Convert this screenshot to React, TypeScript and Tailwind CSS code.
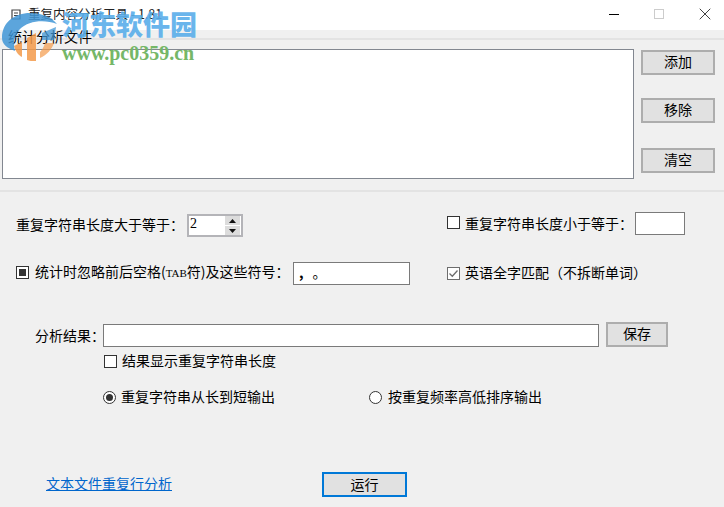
import { X } from "lucide-react"

const FONT = "font-['Noto_Sans_CJK_SC','Liberation_Sans',sans-serif]"

function WinButton({ label, className }: { label: string; className: string }) {
  return (
    <button
      type="button"
      className={`flex items-center justify-center border-2 border-[#adadad] bg-[#e1e1e1] pb-[3px] text-[14px] text-black ${className}`}
    >
      {label}
    </button>
  )
}

function Check({ mode }: { mode: "empty" | "mixed" | "checked" }) {
  return (
    <span
      className={`flex h-[13px] w-[13px] shrink-0 items-center justify-center border ${
        mode === "checked" ? "border-[#6d6d6d]" : "border-[#333333]"
      } bg-white`}
    >
      {mode === "mixed" && <span className="h-[7px] w-[7px] bg-[#333333]" />}
      {mode === "checked" && (
        <svg width="11" height="11" viewBox="0 0 11 11" fill="none">
          <path d="M1.5 5.5 L4.3 8.2 L9.5 2.5" stroke="#6d6d6d" strokeWidth="1.3" />
        </svg>
      )}
    </span>
  )
}

function Radio({ on }: { on: boolean }) {
  return (
    <span className="flex h-[13px] w-[13px] shrink-0 items-center justify-center rounded-full border border-[#333333] bg-white">
      {on && <span className="h-[7px] w-[7px] rounded-full bg-[#333333]" />}
    </span>
  )
}

function Spinner() {
  return (
    <div className="flex h-[23px] w-[56px] items-center border-2 border-[#b4b4b8] bg-white pl-[1px]">
      <span className="flex-1 pb-[4px] font-['Liberation_Serif',serif] text-[14px] leading-[16px]">2</span>
      <div className="mr-[1px] flex w-[15px] flex-col gap-[1px]">
        <span className="flex h-[9px] items-center justify-center bg-[#dcdcdc]">
          <svg width="7" height="4" viewBox="0 0 7 4"><path d="M3.5 0 L7 4 L0 4 Z" fill="#111" /></svg>
        </span>
        <span className="flex h-[9px] items-center justify-center bg-[#dcdcdc]">
          <svg width="7" height="4" viewBox="0 0 7 4"><path d="M0 0 L7 0 L3.5 4 Z" fill="#111" /></svg>
        </span>
      </div>
    </div>
  )
}

function Watermark() {
  return (
    <div className="pointer-events-none absolute left-0 top-0 h-[64px] w-[200px]">
      <svg className="absolute left-0 top-0" width="62" height="64" viewBox="0 0 62 64">
        <path d="M2 38 C2 22 15 13 30 13 C42 13 51 17 57 24 C44 19 28 21 20 29 C14 35 13 44 15 51 C7 48 2 44 2 38 Z" fill="#3f95d6" opacity="0.85" />
        <path d="M14 46 L22 42 L22 57 C18 55 16 52 14 46 Z" fill="#f39a4a" opacity="0.85" />
        <path d="M27 38 L36 33 L36 61 C32 61 29 61 27 60 Z" fill="#f39a4a" opacity="0.85" />
        <path d="M40 58 C47 55 52 49 54 43 L45 43 C44 47 42 50 40 52 Z" fill="#f39a4a" opacity="0.7" />
        <path d="M42 33 L56 27 L54 40 L42 40 Z" fill="#3f95d6" opacity="0.75" />
      </svg>
      <span className="absolute left-[62px] top-[5px] text-[27px] font-black leading-[38px] text-[#5aaeea] opacity-90 whitespace-nowrap">
        河东软件园
      </span>
      <span className="absolute left-[62px] top-[42px] font-['Liberation_Serif',serif] text-[20px] font-bold leading-[22px] text-[#75b768] whitespace-nowrap">
        www.pc0359.cn
      </span>
    </div>
  )
}

export default function App() {
  return (
    <div className={`relative flex h-[507px] w-[724px] flex-col overflow-hidden bg-[#f0f0f0] text-[14px] leading-[20px] text-black ${FONT}`}>
      {/* title bar */}
      <div className="flex h-[30px] shrink-0 items-center bg-white pb-[2px] pl-[11px] pr-[9px]">
        <svg className="mr-[7px]" width="10" height="11" viewBox="0 0 10 11" fill="none">
          <path d="M1 1 H9 V10 H1 Z M3 4 H7 M3 6.5 H7" stroke="#444" strokeWidth="1.2" />
        </svg>
        <span className="flex-1 text-[12.5px] text-[#222]">重复内容分析工具 - 1.81</span>
        <span className="h-[1px] w-[10px] bg-black" />
        <span className="ml-[35px] h-[10px] w-[10px] border border-[#cccccc]" />
        <X className="ml-[31px] h-[20px] w-[20px]" strokeWidth={0.9} />
      </div>

      {/* file list group */}
      <div className="mt-[8px] h-[154px] shrink-0 border-y-2 border-[#e3e3e3] pl-[2px] pr-[9px] pt-[9px]">
        <div className="flex gap-[7px]">
          <div className="h-[130px] flex-1 border border-[#828790] bg-white" />
          <div className="flex w-[74px] flex-col pt-[1px]">
            <WinButton label="添加" className="h-[25px] w-[74px]" />
            <WinButton label="移除" className="mt-[23px] h-[25px] w-[74px]" />
            <WinButton label="清空" className="mt-[25px] h-[25px] w-[74px]" />
          </div>
        </div>
      </div>
      <span className="absolute left-[8px] top-[28px] leading-[17px]">统计分析文件</span>

      {/* options */}
      <div className="mt-[22px] flex h-[23px] shrink-0 items-center pl-[16px]">
        <span className="w-[171px] pb-[4px]">重复字符串长度大于等于：</span>
        <Spinner />
        <span className="mb-[6px] ml-[204px] flex items-center gap-[5px]">
          <Check mode="empty" />
          <span className="w-[170px] whitespace-nowrap">重复字符串长度小于等于：</span>
        </span>
        <div className="-mt-[4px] h-[23px] w-[50px] border border-[#7a7a7a] bg-white" />
      </div>

      <div className="mt-[25px] flex h-[23px] shrink-0 items-center pl-[16px]">
        <span className="mb-[2px]">
          <Check mode="mixed" />
        </span>
        <span className="ml-[6px] w-[258px] whitespace-nowrap pb-[4px]">
          统计时忽略前后空格(<span className="font-['Liberation_Serif',serif] text-[11px]">TAB</span>符)及这些符号：
        </span>
        <div className="h-[23px] w-[117px] border border-[#7a7a7a] bg-white pl-[5px] leading-[19px]">
          <span className="font-bold">,</span>
          <span className="ml-[9px]">。</span>
        </div>
        <span className="ml-[37px] flex items-center gap-[5px]">
          <span className="mb-[1px]">
            <Check mode="checked" />
          </span>
          <span className="pb-[4px]">英语全字匹配（不拆断单词）</span>
        </span>
      </div>

      {/* result */}
      <div className="mt-[39px] flex h-[23px] shrink-0 items-center pl-[35px]">
        <span className="w-[68px] whitespace-nowrap pb-[2px]">分析结果：</span>
        <div className="h-[23px] w-[496px] border border-[#7a7a7a] bg-white" />
        <WinButton label="保存" className="-mt-[2px] ml-[7px] h-[25px] w-[62px]" />
      </div>

      <div className="mt-[4px] flex h-[20px] shrink-0 items-center gap-[5px] pl-[104px]">
        <Check mode="empty" />
        <span className="pb-[2px]">结果显示重复字符串长度</span>
      </div>

      <div className="mt-[16px] flex h-[20px] shrink-0 items-center pl-[103px]">
        <Radio on />
        <span className="ml-[5px] w-[248px] pb-[2px]">重复字符串从长到短输出</span>
        <Radio on={false} />
        <span className="ml-[6px] pb-[2px]">按重复频率高低排序输出</span>
      </div>

      {/* bottom */}
      <div className="mt-[65px] flex h-[25px] shrink-0 items-center pl-[46px]">
        <a href="#" className="mb-[4px] w-[276px] text-[#0066cc] underline">文本文件重复行分析</a>
        <button type="button" className="h-[25px] w-[85px] border-2 border-[#0078d7] bg-[#e1e1e1] pb-[3px]">运行</button>
      </div>

      <Watermark />
    </div>
  )
}
